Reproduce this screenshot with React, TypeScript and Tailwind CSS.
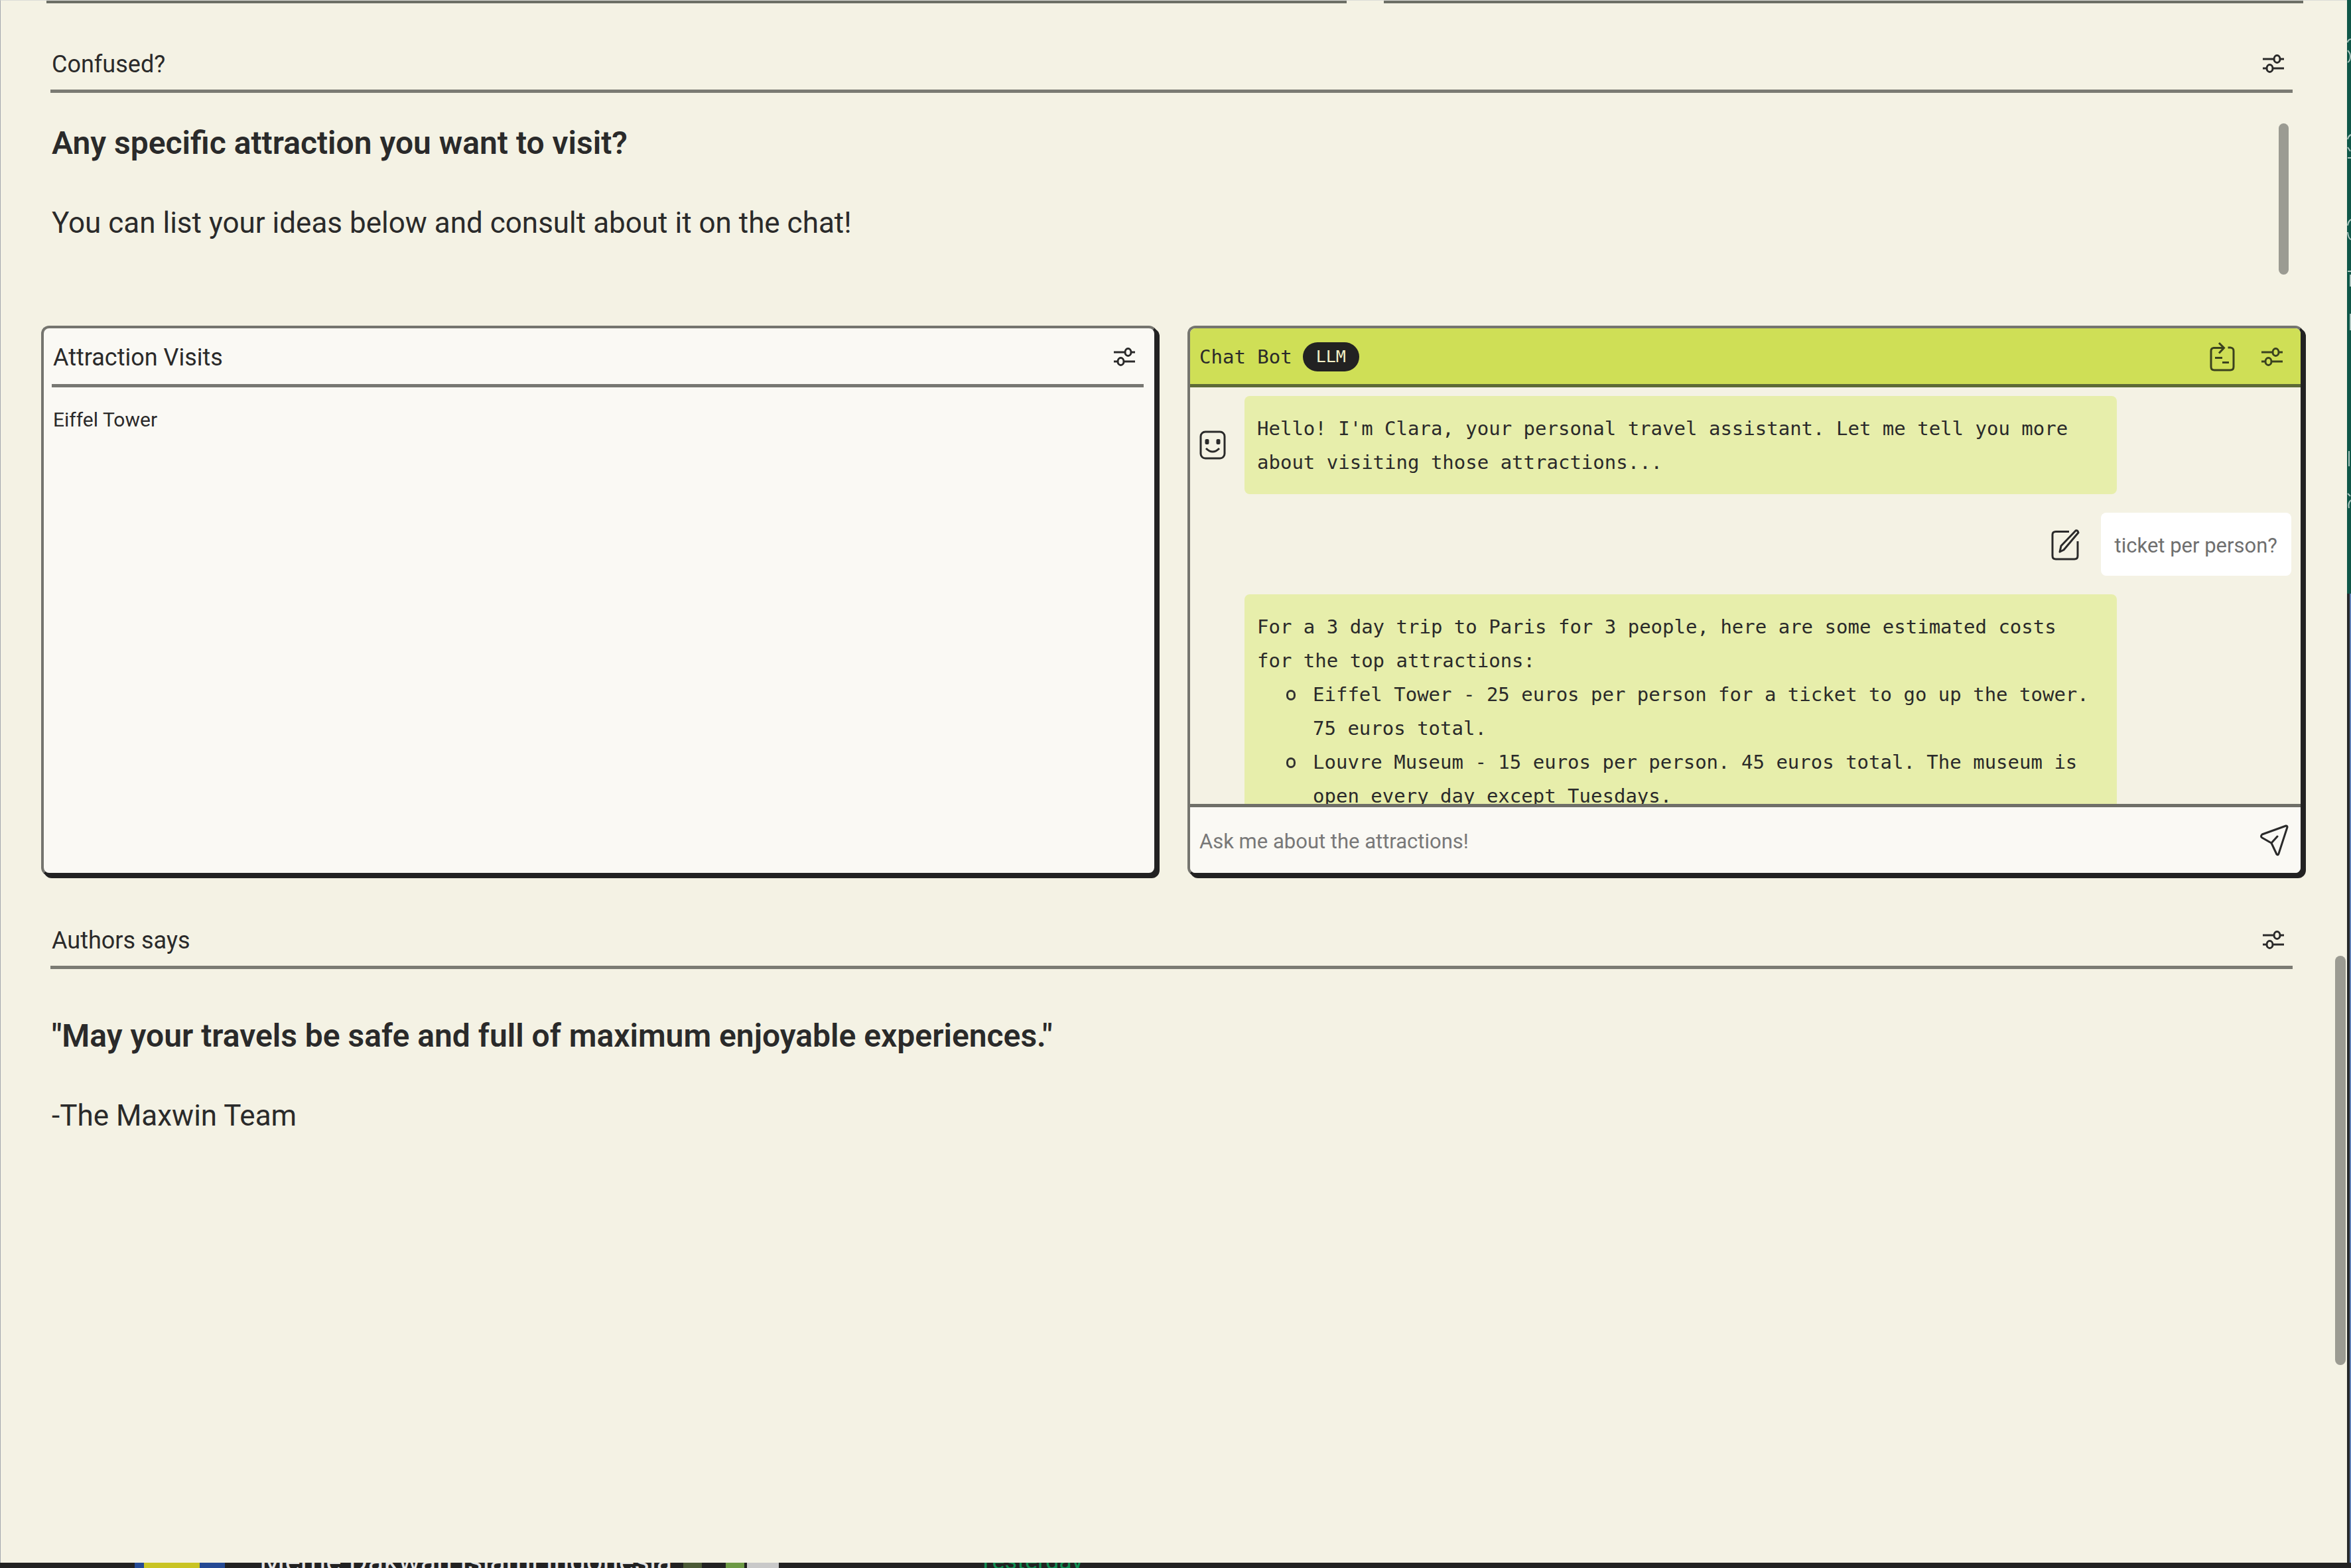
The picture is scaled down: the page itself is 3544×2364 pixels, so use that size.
import { useState } from "react";
import type { ReactNode } from "react";

interface IconButtonProps {
  label: string;
  children: ReactNode;
}

interface SectionHeaderProps {
  title: string;
}

const ATTRACTIONS = [
  "Eiffel Tower - 25 euros per person for a ticket to go up the tower. 75 euros total.",
  "Louvre Museum - 15 euros per person. 45 euros total. The museum is open every day except Tuesdays.",
];

const IconButton = ({ label, children }: IconButtonProps) => (
  <button type="button" aria-label={label} className="shrink-0 cursor-pointer">
    {children}
  </button>
);

const SlidersIcon = () => (
  <svg
    className="h-[30px] w-[34px]"
    viewBox="0 0 34 30"
    fill="none"
    stroke="currentColor"
    strokeWidth="3"
  >
    <path d="M1 8h17M27 8h6M1 22h6M16 22h17" />
    <ellipse cx="22.5" cy="8" rx="4.5" ry="5.5" />
    <ellipse cx="11.5" cy="22" rx="4.5" ry="5.5" />
  </svg>
);

const ClipboardIcon = () => (
  <svg
    className="h-[46px] w-[40px]"
    viewBox="0 0 40 46"
    fill="none"
    stroke="currentColor"
    strokeWidth="3"
  >
    <path d="M22 9.5H7Q3 10 3 14V38Q3 43 8 43H32Q37 43 37 38V14Q37 9.5 32 9H28.5" />
    <path d="M15 2l7.500 7.500l-7.500 8" />
    <path d="M9 24.500h11M20 31.500h10" />
  </svg>
);

const SmileyIcon = () => (
  <svg
    className="h-[44px] w-[40px] shrink-0"
    viewBox="0 0 40 44"
    fill="none"
    stroke="currentColor"
    strokeWidth="3"
  >
    <rect x="2" y="2" width="36" height="40" rx="7" />
    <path d="M10 27Q20 37 30 27" />
    <rect x="8.500" y="13" width="6" height="8" rx="2" fill="currentColor" stroke="none" />
    <rect x="25.500" y="13" width="6" height="8" rx="2" fill="currentColor" stroke="none" />
  </svg>
);

const EditIcon = () => (
  <svg
    className="h-[48px] w-[44px] shrink-0"
    viewBox="0 0 44 48"
    fill="none"
    stroke="currentColor"
    strokeWidth="3"
    strokeLinejoin="round"
  >
    <path d="M28 4.500H8Q3 4.500 3 9V41Q3 46 8 46H36Q41 46 41 41V19" />
    <path d="M14 35l2-9L38 3q3-1 4 3L20 32z" />
  </svg>
);

const SendIcon = () => (
  <svg
    className="h-[48px] w-[44px]"
    viewBox="0 0 44 48"
    fill="none"
    stroke="currentColor"
    strokeWidth="3"
    strokeLinejoin="round"
    strokeLinecap="round"
  >
    <path d="M40 2L4 15Q1 18 4 20L18 28L26 45Q28 47 29 44L42 4Q42 2 40 2Z" />
    <path d="M18 28L27 18" />
  </svg>
);

const SectionHeader = ({ title }: SectionHeaderProps) => (
  <div className="flex h-[83px] items-center justify-between border-b-[5px] border-[#7b7b73] pr-3 pl-0.5">
    <h2 className="pt-0.5 text-[36px] leading-[48px]">{title}</h2>
    <IconButton label={`${title} settings`}>
      <SlidersIcon />
    </IconButton>
  </div>
);

const AttractionPanel = () => {
  const [notes, setNotes] = useState("Eiffel Tower");

  return (
    <section className="flex h-[829px] flex-col rounded-xl border-[4px] border-[#75756f] border-r-[#222] border-b-[#222] bg-[#faf9f4] pr-4 pl-3 shadow-[4px_4px_0_#222]">
      <div className="flex h-[89px] shrink-0 items-center justify-between border-b-[5px] border-[#777772] pt-0.5 pr-3 pl-0.5">
        <label htmlFor="visits" className="pt-0.5 text-[36px] leading-[48px]">
          Attraction Visits
        </label>
        <IconButton label="Attraction settings">
          <SlidersIcon />
        </IconButton>
      </div>
      <textarea
        id="visits"
        value={notes}
        onChange={(e) => setNotes(e.target.value)}
        className="flex-1 resize-none pt-[25px] pl-0.5 text-[30px] leading-[48px] outline-none"
      />
    </section>
  );
};

const ChatPanel = () => {
  const [question, setQuestion] = useState("");

  return (
    <section className="flex h-[829px] flex-col overflow-hidden rounded-xl border-[4px] border-[#75756f] border-r-[#222] border-b-[#222] bg-[#f4f2e4] shadow-[4px_4px_0_#222]">
      <div className="flex h-[89px] shrink-0 items-center border-b-[5px] border-[#5d6a36] bg-[#cfdf56] pt-0.5 pr-[26px] pl-3.5 font-['DejaVu_Sans_Mono','Liberation_Mono',monospace]">
        <h2 className="text-[29px] leading-[48px]">Chat Bot</h2>
        <span className="ml-4 rounded-full bg-[#222] px-5 text-[25px] leading-[44px] text-[#f4f1c8]">
          LLM
        </span>
        <div className="ml-auto flex items-center gap-[38px] text-[#3b421f]">
          <IconButton label="Copy chat">
            <ClipboardIcon />
          </IconButton>
          <IconButton label="Chat settings">
            <SlidersIcon />
          </IconButton>
        </div>
      </div>

      <div className="flex flex-1 flex-col gap-7 overflow-hidden px-3.5 pt-[13px] font-['DejaVu_Sans_Mono','Liberation_Mono',monospace] text-[29px] leading-[51px]">
        <div className="flex shrink-0 items-center gap-7">
          <SmileyIcon />
          <p className="w-[1315px] rounded-lg bg-[#e7eeab] pt-6 pr-7 pb-[22px] pl-[19px]">
            Hello! I'm Clara, your personal travel assistant. Let me tell you
            more about visiting those attractions...
          </p>
        </div>
        <div className="flex shrink-0 items-center justify-end gap-8">
          <IconButton label="Edit message">
            <EditIcon />
          </IconButton>
          <p className="rounded-lg bg-white px-[21px] pt-6 pb-5 font-[Roboto,sans-serif] text-[31px] text-[#6f6f6f]">
            ticket per person?
          </p>
        </div>
        <div className="ml-[68px] w-[1315px] shrink-0 rounded-lg bg-[#e7eeab] pt-6 pr-7 pb-[22px] pl-[19px]">
          <p>
            For a 3 day trip to Paris for 3 people, here are some estimated
            costs for the top attractions:
          </p>
          <ul>
            {ATTRACTIONS.map((text) => (
              <li key={text} className="flex pl-11">
                <span className="mt-[18px] mr-[26px] h-4 w-3.5 shrink-0 rounded-full border-[3px] border-[#333]" />
                <span>{text}</span>
              </li>
            ))}
          </ul>
        </div>
      </div>

      <form
        onSubmit={(e) => e.preventDefault()}
        className="flex h-[104px] shrink-0 items-center border-t-[5px] border-[#6f6f68] bg-[#faf9f4] pr-[18px] pl-3.5"
      >
        <input
          type="text"
          value={question}
          onChange={(e) => setQuestion(e.target.value)}
          aria-label="Ask me about the attractions!"
          placeholder="Ask me about the attractions!"
          className="min-w-0 flex-1 pt-1 text-[31px] leading-[48px] outline-none placeholder:text-[#787878]"
        />
        <IconButton label="Send">
          <SendIcon />
        </IconButton>
      </form>
    </section>
  );
};

/* sliver of the window that lies behind, on the right */
const BackdropEdge = () => (
  <div className="flex w-1.5 shrink-0 flex-col overflow-hidden">
    <svg className="h-[895px] w-1.5 shrink-0 bg-[#0f5748]" viewBox="0 0 6 895" fill="none" stroke="#a9c4bd" strokeWidth="2">
      <path d="M6 59Q1 60 1 64M1 76Q5 80 5 85Q5 92 1 94M6 203Q2 205 1 210M1 222L5 228M1 238H6M6 331Q2 333 1 340M1 350Q2 360 6 361M1 409H6M5 414V432M5 473V498M3 680V703M1 744L5 748M6 754Q1 758 3 766" />
    </svg>
    <div className="flex-1 border-r-2 border-[#5f7fb5] bg-[#26292a]" />
  </div>
);

/* top of the chat list that shows under the window */
const BackdropFooter = () => (
  <div className="flex h-2 shrink-0 items-end overflow-hidden bg-[#222] pl-[203px] font-[Roboto,sans-serif] text-[44px] leading-[20px]">
    <div className="h-2 w-[136px] border-r-[38px] border-l-[14px] border-[#254a94] bg-[#c9c423]" />
    <span className="ml-[52px] w-[627px] whitespace-nowrap text-[#e4e4e4]">
      Meme Dakwah Islami Indonesia
    </span>
    <span className="ml-3 h-2 w-7 bg-[#4b5a36]" />
    <span className="ml-9 h-2 w-7 bg-[#6d9a45]" />
    <span className="ml-1 h-2 w-12 bg-[#c9c9c9]" />
    <span className="ml-[301px] text-[36px] text-[#0f8f52]">Yesterday</span>
  </div>
);

const App = () => (
  <div className="flex min-h-screen flex-col bg-[#f4f2e4] font-[Roboto,sans-serif] text-[#2a2a2a]">
    <div className="flex flex-1">
      <main className="relative flex-1 border-t border-l border-t-[#dcdcd8] border-l-[#a4a9ae] pr-[66px] pl-[61px]">
        <div className="flex gap-[56px] pl-2">
          <div className="h-1 flex-[1960] bg-[#6c6f66]" />
          <div className="h-1 flex-[1386] bg-[#6c6f66]" />
        </div>

        <section className="mt-[52px] pr-4 pl-3.5">
          <SectionHeader title="Confused?" />
          <div className="flex h-[351px] justify-between pt-[46px] pr-1.5 pl-0.5 leading-[60px]">
            <div>
              <h3 className="text-[48px] font-semibold">
                Any specific attraction you want to visit?
              </h3>
              <p className="mt-[60px] text-[44px]">
                You can list your ideas below and consult about it on the chat!
              </p>
            </div>
            <div className="h-[228px] w-[15px] rounded-full bg-[#9b9b92]" />
          </div>
        </section>

        <div className="grid grid-cols-2 gap-[46px]">
          <AttractionPanel />
          <ChatPanel />
        </div>

        <section className="mt-[58px] pr-4 pl-3.5">
          <SectionHeader title="Authors says" />
          <div className="pt-[71px] pl-0.5 leading-[60px]">
            <h3 className="text-[48px] font-semibold">
              "May your travels be safe and full of maximum enjoyable
              experiences."
            </h3>
            <p className="mt-[60px] text-[44px]">-The Maxwin Team</p>
          </div>
        </section>

        {/* page scrollbar */}
        <div className="absolute top-[1440px] right-0.5 h-[617px] w-4 rounded-full bg-[#9b9b92]" />
      </main>
      <BackdropEdge />
    </div>
    <BackdropFooter />
  </div>
);

export default App;
